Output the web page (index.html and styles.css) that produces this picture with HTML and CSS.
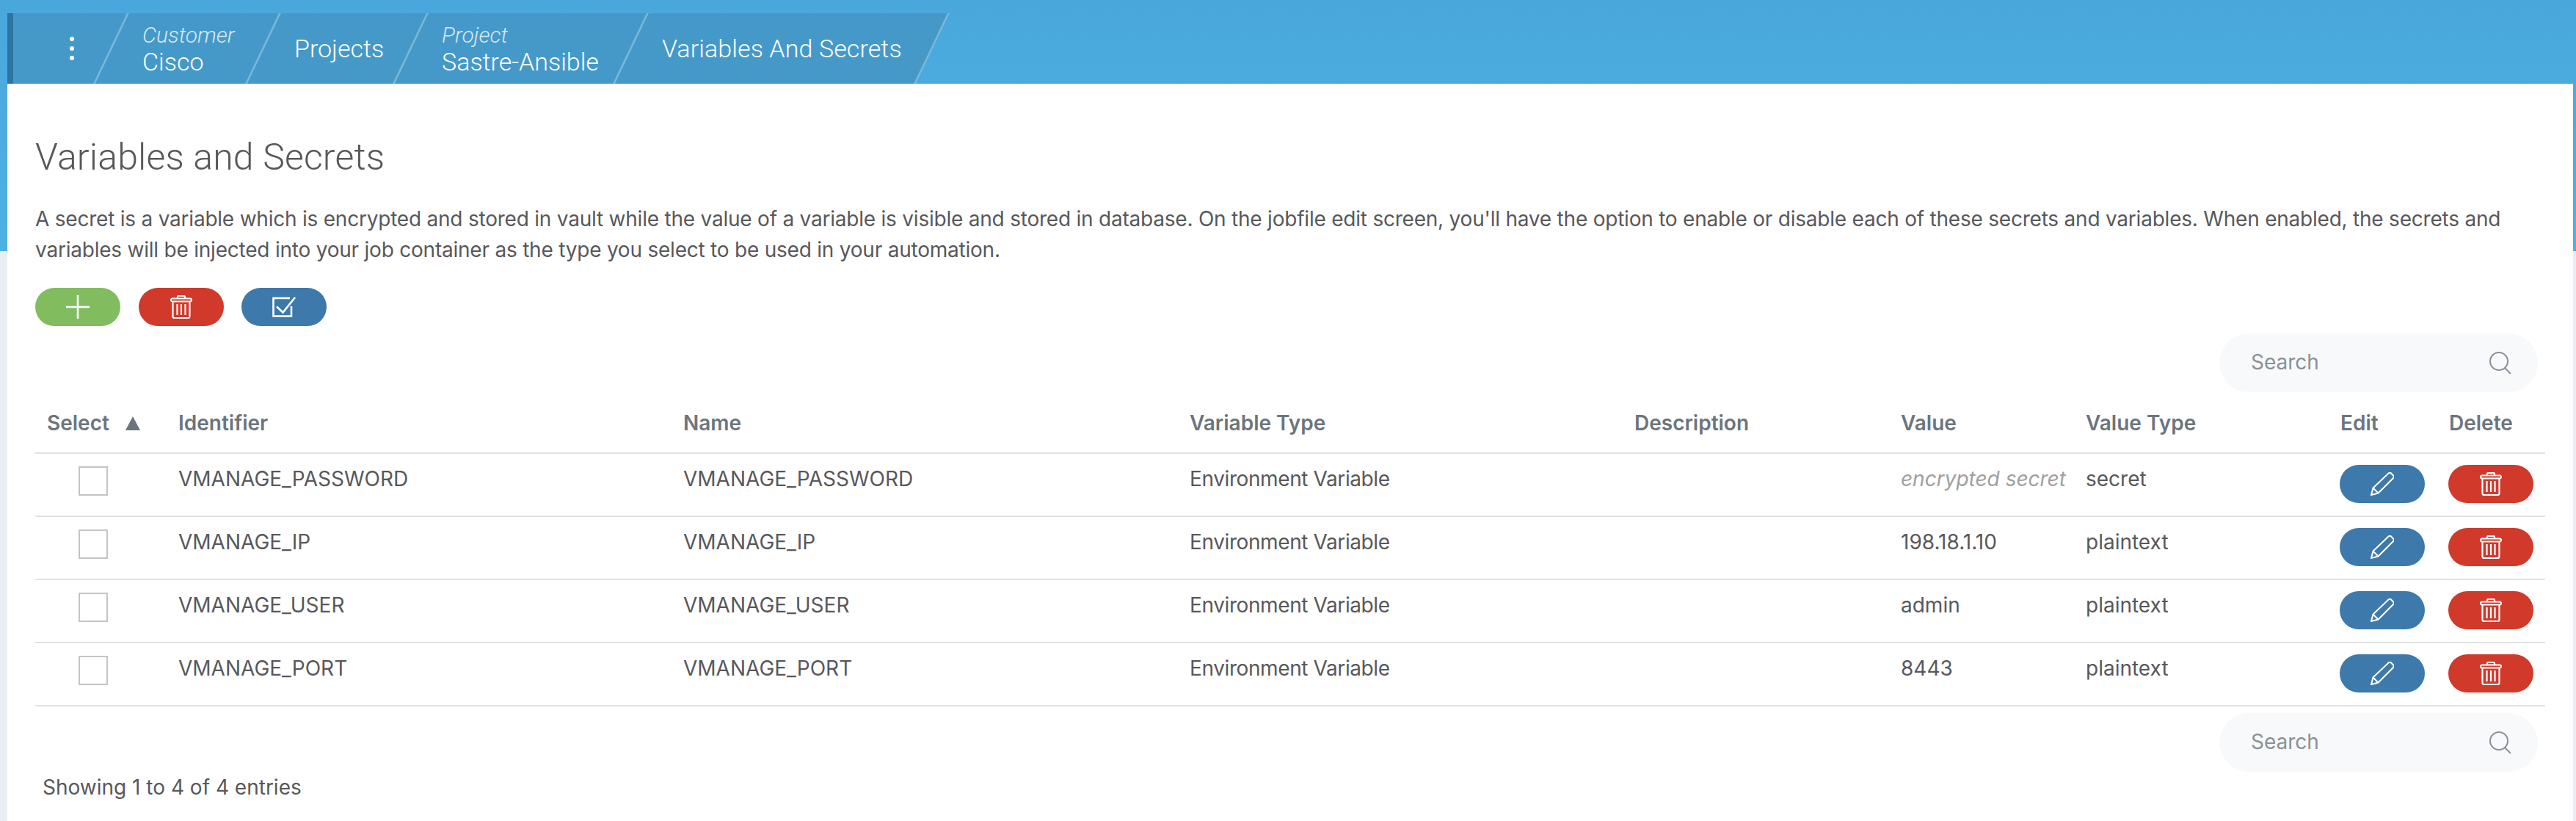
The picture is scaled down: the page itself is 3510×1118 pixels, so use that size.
FILE: index.html
```html
<!DOCTYPE html>
<html lang="en">
  <head>
    <meta charset="UTF-8" />
    <title>Variables and Secrets</title>
    <link rel="stylesheet" href="styles.css">
  </head>
  <body>
    <svg class="icon-defs" aria-hidden="true">
      <symbol id="i-trash" viewBox="0 0 30 32">
        <path d="M10 4.5V2.5q0-1.5 1.5-1.5h7q1.500 0 1.500 1.500v2" />
        <rect x="1" y="4.500" width="28" height="4" rx="2" />
        <path d="M3.500 8.500V29q0 2 2 2h19q2 0 2-2V8.500" />
        <path d="M9.500 12v15M15 12v15M20.500 12v15" />
      </symbol>
      <symbol id="i-pencil" viewBox="0 0 32 32">
        <path d="M1 31l2.500-9.500L24.500 1.500q2-1.500 3.500 0l3 3q1.500 1.500 0 3.500L10.500 28.500z" />
        <path d="M3.500 21.500l7 7" />
      </symbol>
      <symbol id="i-check" viewBox="0 0 32 28">
        <path d="M24 2H1.500v24.500H26V13" />
        <path d="M6 13.500l8.500 8L31 1" />
      </symbol>
      <symbol id="i-plus" viewBox="0 0 32 32">
        <path d="M16 0v32M0 16h32" />
      </symbol>
      <symbol id="i-search" viewBox="0 0 30 30">
        <circle cx="13" cy="13" r="12" />
        <path d="M21 22l8 8" />
      </symbol>
    </svg>

    <nav class="crumbs">
      <div class="crumb crumb-menu">
        <span class="dots"><i></i><i></i><i></i></span>
      </div>
      <div class="crumb crumb-customer">
        <em>Customer</em>
        <span>Cisco</span>
      </div>
      <div class="crumb crumb-projects"><span>Projects</span></div>
      <div class="crumb crumb-project">
        <em>Project</em>
        <span>Sastre-Ansible</span>
      </div>
      <div class="crumb crumb-page"><span>Variables And Secrets</span></div>
    </nav>

    <main class="panel">
      <h1>Variables and Secrets</h1>
      <p class="intro">
        A secret is a variable which is encrypted and stored in vault while the value of a variable is visible and stored in database. On the jobfile edit screen, you'll have the option to enable or disable each of these secrets and variables. When enabled, the secrets and variables will be injected into your job container as the type you select to be used in your automation.
      </p>

      <div class="actions">
        <button class="btn btn-green"><svg class="ic-plus"><use href="#i-plus" /></svg></button>
        <button class="btn btn-red"><svg class="ic-trash"><use href="#i-trash" /></svg></button>
        <button class="btn btn-blue"><svg class="ic-check"><use href="#i-check" /></svg></button>
      </div>

      <div class="search-row">
        <div class="search">
          <span>Search</span>
          <svg class="ic-search"><use href="#i-search" /></svg>
        </div>
      </div>

      <table>
        <colgroup>
          <col class="c-select" />
          <col class="c-id" />
          <col class="c-name" />
          <col class="c-type" />
          <col class="c-desc" />
          <col class="c-value" />
          <col class="c-vtype" />
          <col class="c-edit" />
          <col class="c-delete" />
        </colgroup>
        <thead>
          <tr>
            <th>Select<i class="sort-up"></i></th>
            <th>Identifier</th>
            <th>Name</th>
            <th>Variable Type</th>
            <th>Description</th>
            <th>Value</th>
            <th>Value Type</th>
            <th>Edit</th>
            <th>Delete</th>
          </tr>
        </thead>
        <tbody>
          <tr>
            <td class="cell-check"><i class="checkbox"></i></td>
            <td>VMANAGE_PASSWORD</td>
            <td>VMANAGE_PASSWORD</td>
            <td class="cell-env">Environment Variable</td>
            <td></td>
            <td class="muted">encrypted secret</td>
            <td>secret</td>
            <td class="cell-btn"><button class="btn btn-blue"><svg class="ic-pencil"><use href="#i-pencil" /></svg></button></td>
            <td class="cell-btn"><button class="btn btn-red"><svg class="ic-trash"><use href="#i-trash" /></svg></button></td>
          </tr>
          <tr>
            <td class="cell-check"><i class="checkbox"></i></td>
            <td>VMANAGE_IP</td>
            <td>VMANAGE_IP</td>
            <td class="cell-env">Environment Variable</td>
            <td></td>
            <td>198.18.1.10</td>
            <td>plaintext</td>
            <td class="cell-btn"><button class="btn btn-blue"><svg class="ic-pencil"><use href="#i-pencil" /></svg></button></td>
            <td class="cell-btn"><button class="btn btn-red"><svg class="ic-trash"><use href="#i-trash" /></svg></button></td>
          </tr>
          <tr>
            <td class="cell-check"><i class="checkbox"></i></td>
            <td>VMANAGE_USER</td>
            <td>VMANAGE_USER</td>
            <td class="cell-env">Environment Variable</td>
            <td></td>
            <td>admin</td>
            <td>plaintext</td>
            <td class="cell-btn"><button class="btn btn-blue"><svg class="ic-pencil"><use href="#i-pencil" /></svg></button></td>
            <td class="cell-btn"><button class="btn btn-red"><svg class="ic-trash"><use href="#i-trash" /></svg></button></td>
          </tr>
          <tr>
            <td class="cell-check"><i class="checkbox"></i></td>
            <td>VMANAGE_PORT</td>
            <td>VMANAGE_PORT</td>
            <td class="cell-env">Environment Variable</td>
            <td></td>
            <td>8443</td>
            <td>plaintext</td>
            <td class="cell-btn"><button class="btn btn-blue"><svg class="ic-pencil"><use href="#i-pencil" /></svg></button></td>
            <td class="cell-btn"><button class="btn btn-red"><svg class="ic-trash"><use href="#i-trash" /></svg></button></td>
          </tr>
        </tbody>
      </table>

      <div class="search-row search-row-bottom">
        <div class="search">
          <span>Search</span>
          <svg class="ic-search"><use href="#i-search" /></svg>
        </div>
      </div>
      <div class="info">Showing 1 to 4 of 4 entries</div>
    </main>
  </body>
</html>
```

FILE: styles.css
```css
html,
body {
  height: 100%;
}

body {
  margin: 0;
  padding: 18px 4px 0 10px;
  box-sizing: border-box;
  background: linear-gradient(#49a7dc, #4fb1e3 342px, #e9eef4 342px);
  font-family: Inter, "Liberation Sans", sans-serif;
  font-size: 28px;
  line-height: 42px;
  color: #58585b;
  overflow: hidden;
}

.icon-defs {
  display: none;
}

svg {
  fill: none;
  stroke: #fff;
  stroke-width: 2;
  display: block;
}

/* breadcrumb */
.crumbs {
  display: flex;
  height: 96px;
  width: 1320px;
  border-left: 8px solid #2d74a0;
  overflow: hidden;
  font-family: Roboto, sans-serif;
  font-weight: 300;
  color: #fff;
  font-size: 34px;
  line-height: 37px;
}

.crumb {
  position: relative;
  z-index: 0;
  display: flex;
  flex-direction: column;
  justify-content: center;
  box-sizing: border-box;
  padding: 0 0 0 41px;
  white-space: nowrap;
}

.crumb::before {
  content: "";
  position: absolute;
  top: 0;
  bottom: 0;
  left: 0;
  right: 0;
  z-index: -1;
  background: #4599c9;
  border-right: 3px solid #79b8d8;
  transform: skewX(-25.6deg);
}

.crumb em {
  font-size: 30px;
  color: #d5e9f4;
}

.crumb-menu {
  width: 135px;
  padding-left: 77px;
}

.crumb-menu::before {
  left: -60px;
}

.crumb-customer {
  width: 207px;
}

.crumb-projects {
  width: 201px;
}

.crumb-project {
  width: 300px;
}

.crumb-page {
  width: 410px;
  letter-spacing: 0.1px;
}

.dots {
  display: flex;
  flex-direction: column;
  gap: 7px;
}

.dots i {
  width: 6px;
  height: 6px;
  border-radius: 50%;
  background: #fff;
}

/* main panel */
.panel {
  background: #fff;
  height: 1004px;
  padding: 0 38px;
  box-sizing: border-box;
}

h1 {
  margin: 0;
  padding-top: 69px;
  font-size: 50px;
  line-height: 62px;
  font-weight: 300;
  letter-spacing: 0.15px;
  font-family: Roboto, sans-serif;
}

.intro {
  margin: 32px 0 31px;
  width: 3440px;
  letter-spacing: -0.22px;
}

.actions {
  display: flex;
  gap: 24.5px;
}

.btn {
  width: 116px;
  height: 52px;
  border: 0;
  padding: 0;
  border-radius: 26px;
  display: flex;
  align-items: center;
  justify-content: center;
}

.btn-green {
  background: #81bd5e;
}

.btn-red {
  background: #d1392a;
}

.btn-blue {
  background: #3d79aa;
}

.ic-plus {
  width: 32px;
  height: 32px;
  stroke-width: 2.6;
}

.ic-trash {
  width: 30px;
  height: 32px;
  stroke-width: 2.2;
}

.ic-check {
  width: 32px;
  height: 28px;
  stroke-width: 2.6;
}

.ic-pencil {
  width: 32px;
  height: 32px;
}

.ic-search {
  width: 30px;
  height: 30px;
  stroke: #8a9099;
}

/* search boxes */
.search-row {
  display: flex;
  justify-content: flex-end;
  margin-top: 10px;
  padding-right: 10px;
}

.search-row-bottom {
  margin-top: 9px;
}

.search {
  width: 434px;
  height: 80px;
  box-sizing: border-box;
  padding: 0 36px 0 43px;
  border-radius: 40px;
  background: #f8f9fb;
  display: flex;
  align-items: center;
  justify-content: space-between;
  color: #8a9099;
}

.search span {
  position: relative;
  top: -1px;
}

/* table */
table {
  width: 3420px;
  table-layout: fixed;
  border-collapse: collapse;
}

.c-select { width: 179px; }
.c-id { width: 688px; }
.c-name { width: 690px; }
.c-type { width: 606px; }
.c-desc { width: 363px; }
.c-value { width: 252px; }
.c-vtype { width: 347px; }
.c-edit { width: 148px; }
.c-delete { width: 147px; }

th {
  height: 83px;
  padding: 2px 0 0 16px;
  box-sizing: border-box;
  text-align: left;
  font-weight: 600;
  color: #6c757d;
  border-bottom: 2px solid #e2e2e2;
}

.sort-up {
  display: inline-block;
  margin-left: 22px;
  border-left: 10px solid transparent;
  border-right: 10px solid transparent;
  border-bottom: 19px solid #6c757d;
}

td {
  height: 86px;
  padding: 13px 0 0 16px;
  box-sizing: border-box;
  vertical-align: top;
  border-bottom: 2px solid #e2e2e2;
}

.cell-env {
  letter-spacing: -0.4px;
}

.muted {
  font-style: italic;
  color: #a0a0a0;
}

td.cell-check {
  padding: 17px 0 0 59px;
}

.checkbox {
  display: block;
  width: 40px;
  height: 40px;
  box-sizing: border-box;
  border: 2px solid #c4c4c4;
}

td.cell-btn {
  padding: 15px 0 0 15px;
}

.info {
  padding-left: 10px;
}
```
